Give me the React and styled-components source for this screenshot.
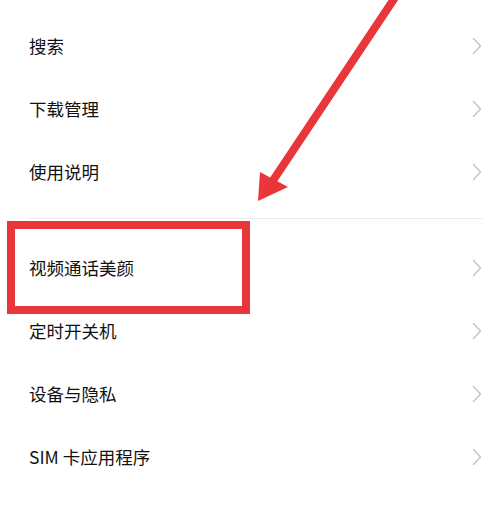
import React from "react";
import styled, { createGlobalStyle } from "styled-components";

const GlobalStyle = createGlobalStyle`
  html, body {
    margin: 0;
    padding: 0;
    background: #ffffff;
  }
  body {
    font-family: "Noto Sans CJK SC", "Noto Sans", sans-serif;
  }
`;

const groups = [
  ["搜索", "下载管理", "使用说明"],
  ["视频通话美颜", "定时开关机", "设备与隐私", "SIM 卡应用程序"],
];

const Chevron = () => (
  <svg width="10" height="18" viewBox="0 0 10 18">
    <polyline
      points="1.5,1.5 8.5,9 1.5,16.5"
      fill="none"
      stroke="#c6c6c6"
      strokeWidth="1.5"
      strokeLinecap="round"
      strokeLinejoin="round"
    />
  </svg>
);

const App = () => {
  return (
    <>
      <GlobalStyle />
      <Page>
        <List>
          {groups.map((items, gi) => (
            <React.Fragment key={gi}>
              {gi > 0 && <Divider />}
              <Group>
                {items.map((label) => (
                  <Row key={label}>
                    <Label>{label}</Label>
                    <Chevron />
                  </Row>
                ))}
              </Group>
            </React.Fragment>
          ))}
        </List>

        <Highlight />
        <Arrow width="500" height="508" viewBox="0 0 500 508">
          <line x1="396" y1="-4" x2="272" y2="182" stroke="#e8363b" strokeWidth="8" />
          <polygon points="258,201 260,172 288,187" fill="#e8363b" />
        </Arrow>
      </Page>
    </>
  );
};

export default App;

const Page = styled.div`
  position: relative;
  width: 500px;
  height: 508px;
  overflow: hidden;
  background: #ffffff;
`;

const List = styled.div`
  display: flex;
  flex-direction: column;
  padding-top: 14px;
`;

const Group = styled.div`
  display: flex;
  flex-direction: column;
`;

const Row = styled.div`
  display: flex;
  align-items: center;
  justify-content: space-between;
  height: 63px;
  padding: 0 18px 0 29px;
`;

const Label = styled.span`
  font-size: 17.5px;
  line-height: 1;
  color: #111111;
`;

const Divider = styled.div`
  height: 1px;
  background: #ebebeb;
  margin: 15px 18px 17px 29px;
`;

const Highlight = styled.div`
  position: absolute;
  left: 7px;
  top: 221px;
  width: 243px;
  height: 93px;
  box-sizing: border-box;
  border: 8px solid #e8363b;
`;

const Arrow = styled.svg`
  position: absolute;
  left: 0;
  top: 0;
  pointer-events: none;
`;
